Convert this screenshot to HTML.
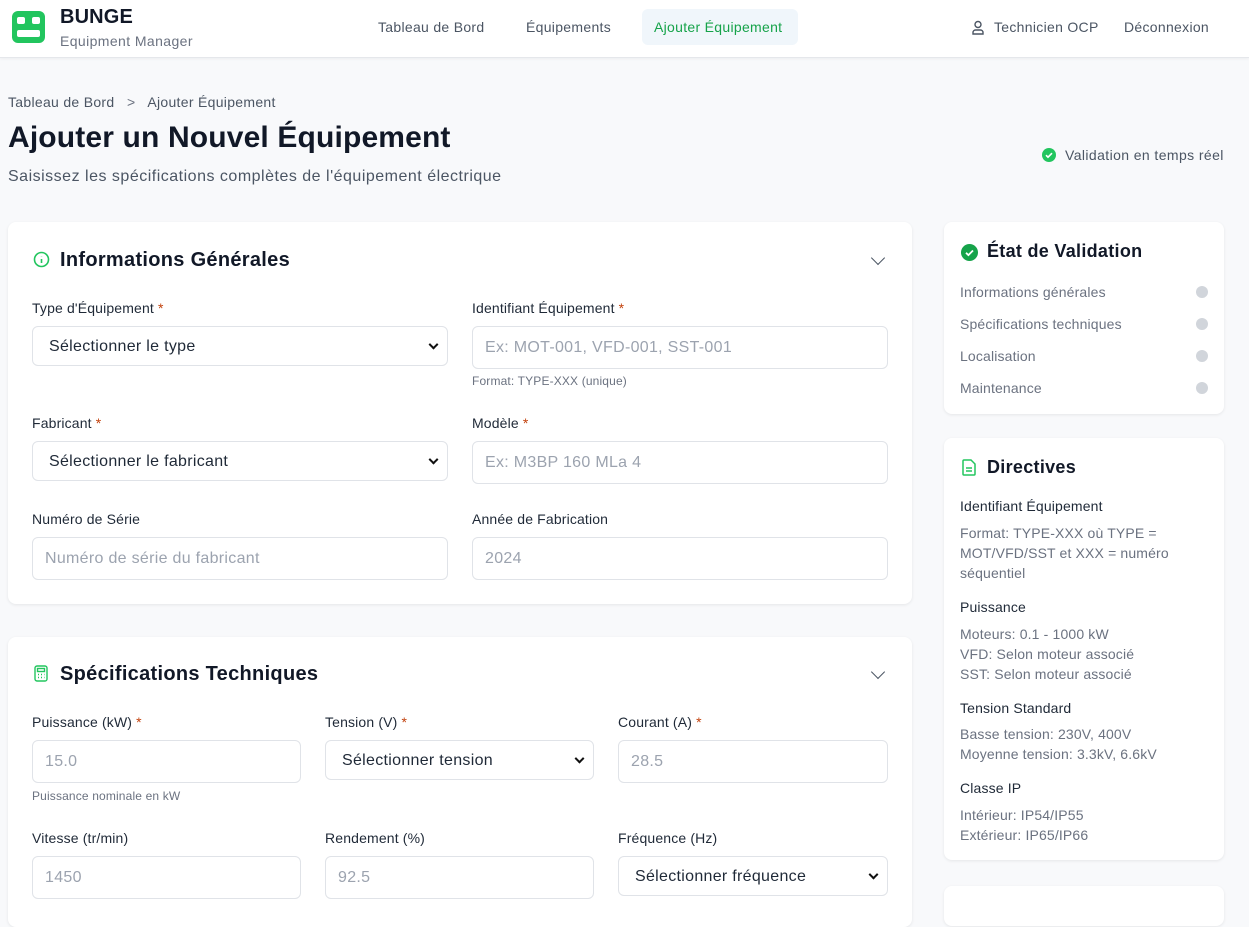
<!DOCTYPE html>
<html><head><meta charset="utf-8"><style>
*{box-sizing:border-box;margin:0;padding:0}
body{width:1249px;height:907px;overflow:hidden;background:#f8f9fb;font-family:"Liberation Sans",sans-serif;color:#111827;position:relative;letter-spacing:.15px}
.a{position:absolute}
.hdr{left:0;top:0;width:1249px;height:58px;background:#fff;border-bottom:1px solid #e5e7eb;box-shadow:0 1px 3px rgba(0,0,0,.05)}
.nav{font-size:14px;color:#4b5563;letter-spacing:.3px}
.card{background:#fff;border-radius:8px;box-shadow:0 1px 3px rgba(0,0,0,.08)}
.lbl{font-size:14px;color:#1f2937}
.lbl b{color:#c2410c;font-weight:normal}
.in{background:#fff;border:1px solid #e0e3e8;border-radius:6px;font-size:16px;color:#9ca3af;padding-left:12px;display:flex;align-items:center;letter-spacing:.3px}
.sel{color:#1f2937;padding-left:16px;padding-top:2px}
.sel:after{content:"";position:absolute;right:10px;top:50%;width:5px;height:5px;border-right:2px solid #111;border-bottom:2px solid #111;transform:translateY(-70%) rotate(45deg)}
.hint{font-size:12px;color:#6b7280}
.h2{font-size:20px;font-weight:bold;color:#111827;letter-spacing:.3px}
.chev{width:10px;height:10px;border-right:1.6px solid #4b5563;border-bottom:1.6px solid #4b5563;transform:rotate(45deg)}
.vl{font-size:14px;color:#6b7280}
.dot{width:12px;height:12px;border-radius:50%;background:#d1d5db}
.dh{font-size:14px;color:#1f2937}
.dt{font-size:14px;color:#6b7280;line-height:20px}
</style></head><body>
<div class="a hdr"></div>
<div class="a" style="left:12px;top:11px;width:33px;height:32px;background:#22c55e;border-radius:6px"></div>
<div class="a" style="left:17px;top:17px;width:8px;height:7px;background:#fff;border-radius:2px"></div>
<div class="a" style="left:32px;top:17px;width:8px;height:7px;background:#fff;border-radius:2px"></div>
<div class="a" style="left:17px;top:30px;width:23px;height:7px;background:#fff;border-radius:2px"></div>
<div class="a" style="left:60px;top:6px;font-size:20px;font-weight:bold">BUNGE</div>
<div class="a" style="left:60px;top:33px;font-size:14px;color:#6b7280;letter-spacing:.4px">Equipment Manager</div>
<div class="a nav" style="left:378px;top:19px">Tableau de Bord</div>
<div class="a nav" style="left:526px;top:19px">Équipements</div>
<div class="a" style="left:642px;top:9px;width:156px;height:36px;background:#f0f6fb;border-radius:6px"></div>
<div class="a nav" style="left:654px;top:19px;color:#16a34a">Ajouter Équipement</div>
<svg class="a" style="left:971px;top:20px" width="14" height="15" viewBox="0 0 14 15" fill="none" stroke="#4b5563" stroke-width="1.4"><circle cx="7" cy="4.5" r="3"/><path d="M2 14v-1.5a2.5 2.5 0 0 1 2.5-2.5h5a2.5 2.5 0 0 1 2.5 2.5V14z"/></svg>
<div class="a nav" style="left:994px;top:19px">Technicien OCP</div>
<div class="a nav" style="left:1124px;top:19px">Déconnexion</div>

<div class="a" style="left:8px;top:94px;font-size:14px;color:#4b5563;letter-spacing:.3px">Tableau de Bord &nbsp;&nbsp;<span style="color:#6b7280">&gt;</span>&nbsp;&nbsp; Ajouter Équipement</div>
<div class="a" style="left:8px;top:121px;font-size:30px;font-weight:bold">Ajouter un Nouvel Équipement</div>
<div class="a" style="left:8px;top:168px;font-size:16px;color:#4b5563;letter-spacing:.5px">Saisissez les spécifications complètes de l'équipement électrique</div>
<svg class="a" style="left:1042px;top:148px" width="14" height="14"><circle cx="7" cy="7" r="7" fill="#22c55e"/><path d="M4 7.2l2 2 4-4" stroke="#fff" stroke-width="1.6" fill="none"/></svg>
<div class="a" style="left:1065px;top:147px;font-size:14px;color:#4b5563;letter-spacing:.4px">Validation en temps réel</div>

<div class="a card" style="left:8px;top:222px;width:904px;height:382px"></div>
<svg class="a" style="left:33px;top:251px" width="17" height="17" fill="none" stroke="#22c55e" stroke-width="1.6"><circle cx="8.5" cy="8.5" r="7"/><path d="M8.5 8v4M8.5 5.5v.3"/></svg>
<div class="a h2" style="left:60px;top:249px">Informations Générales</div>
<div class="a chev" style="left:873px;top:253px"></div>
<div class="a lbl" style="left:32px;top:300px">Type d'Équipement <b>*</b></div>
<div class="a in sel" style="left:32px;top:326px;width:416px;height:40px">Sélectionner le type</div>
<div class="a lbl" style="left:472px;top:300px">Identifiant Équipement <b>*</b></div>
<div class="a in" style="left:472px;top:326px;width:416px;height:43px">Ex: MOT-001, VFD-001, SST-001</div>
<div class="a hint" style="left:472px;top:374px">Format: TYPE-XXX (unique)</div>
<div class="a lbl" style="left:32px;top:415px">Fabricant <b>*</b></div>
<div class="a in sel" style="left:32px;top:441px;width:416px;height:40px">Sélectionner le fabricant</div>
<div class="a lbl" style="left:472px;top:415px">Modèle <b>*</b></div>
<div class="a in" style="left:472px;top:441px;width:416px;height:43px">Ex: M3BP 160 MLa 4</div>
<div class="a lbl" style="left:32px;top:511px">Numéro de Série</div>
<div class="a in" style="left:32px;top:537px;width:416px;height:43px">Numéro de série du fabricant</div>
<div class="a lbl" style="left:472px;top:511px">Année de Fabrication</div>
<div class="a in" style="left:472px;top:537px;width:416px;height:43px">2024</div>

<div class="a card" style="left:8px;top:637px;width:904px;height:290px"></div>
<svg class="a" style="left:34px;top:665px" width="14" height="17" fill="none" stroke="#22c55e" stroke-width="1.4"><rect x="1" y="1" width="12" height="15" rx="2"/><rect x="3.5" y="3.5" width="7" height="3"/><path d="M4 9.5h1M7 9.5h1M10 9.5h0.5M4 12.5h1M7 12.5h1M10 12.5h0.5"/></svg>
<div class="a h2" style="left:60px;top:663px">Spécifications Techniques</div>
<div class="a chev" style="left:873px;top:667px"></div>
<div class="a lbl" style="left:32px;top:714px">Puissance (kW) <b>*</b></div>
<div class="a in" style="left:32px;top:740px;width:269px;height:43px">15.0</div>
<div class="a hint" style="left:32px;top:789px">Puissance nominale en kW</div>
<div class="a lbl" style="left:325px;top:714px">Tension (V) <b>*</b></div>
<div class="a in sel" style="left:325px;top:740px;width:269px;height:40px">Sélectionner tension</div>
<div class="a lbl" style="left:618px;top:714px">Courant (A) <b>*</b></div>
<div class="a in" style="left:618px;top:740px;width:270px;height:43px">28.5</div>
<div class="a lbl" style="left:32px;top:830px">Vitesse (tr/min)</div>
<div class="a in" style="left:32px;top:856px;width:269px;height:43px">1450</div>
<div class="a lbl" style="left:325px;top:830px">Rendement (%)</div>
<div class="a in" style="left:325px;top:856px;width:269px;height:43px">92.5</div>
<div class="a lbl" style="left:618px;top:830px">Fréquence (Hz)</div>
<div class="a in sel" style="left:618px;top:856px;width:270px;height:40px">Sélectionner fréquence</div>

<div class="a card" style="left:944px;top:222px;width:280px;height:192px"></div>
<svg class="a" style="left:961px;top:244px" width="17" height="17"><circle cx="8.5" cy="8.5" r="8.5" fill="#16a34a"/><path d="M5 8.8l2.4 2.3 4.6-4.6" stroke="#fff" stroke-width="1.8" fill="none"/></svg>
<div class="a" style="left:987px;top:241px;font-size:18px;font-weight:bold;letter-spacing:.3px">État de Validation</div>
<div class="a vl" style="left:960px;top:284px">Informations générales</div><div class="a dot" style="left:1196px;top:286px"></div>
<div class="a vl" style="left:960px;top:316px">Spécifications techniques</div><div class="a dot" style="left:1196px;top:318px"></div>
<div class="a vl" style="left:960px;top:348px">Localisation</div><div class="a dot" style="left:1196px;top:350px"></div>
<div class="a vl" style="left:960px;top:380px">Maintenance</div><div class="a dot" style="left:1196px;top:382px"></div>

<div class="a card" style="left:944px;top:438px;width:280px;height:422px"></div>
<svg class="a" style="left:962px;top:459px" width="14" height="17" fill="none" stroke="#22c55e" stroke-width="1.5"><path d="M2 1h7l4 4v10a1 1 0 0 1-1 1H2a1 1 0 0 1-1-1V2a1 1 0 0 1 1-1z"/><path d="M4 9h6M4 12h6"/></svg>
<div class="a" style="left:987px;top:457px;font-size:18px;font-weight:bold;letter-spacing:.3px">Directives</div>
<div class="a dh" style="left:960px;top:498px">Identifiant Équipement</div>
<div class="a dt" style="left:960px;top:523px;width:250px">Format: TYPE-XXX où TYPE = MOT/VFD/SST et XXX = numéro séquentiel</div>
<div class="a dh" style="left:960px;top:599px">Puissance</div>
<div class="a dt" style="left:960px;top:624px">Moteurs: 0.1 - 1000 kW<br>VFD: Selon moteur associé<br>SST: Selon moteur associé</div>
<div class="a dh" style="left:960px;top:700px">Tension Standard</div>
<div class="a dt" style="left:960px;top:724px">Basse tension: 230V, 400V<br>Moyenne tension: 3.3kV, 6.6kV</div>
<div class="a dh" style="left:960px;top:780px">Classe IP</div>
<div class="a dt" style="left:960px;top:805px">Intérieur: IP54/IP55<br>Extérieur: IP65/IP66</div>
<div class="a card" style="left:944px;top:886px;width:280px;height:40px"></div>
</body></html>
